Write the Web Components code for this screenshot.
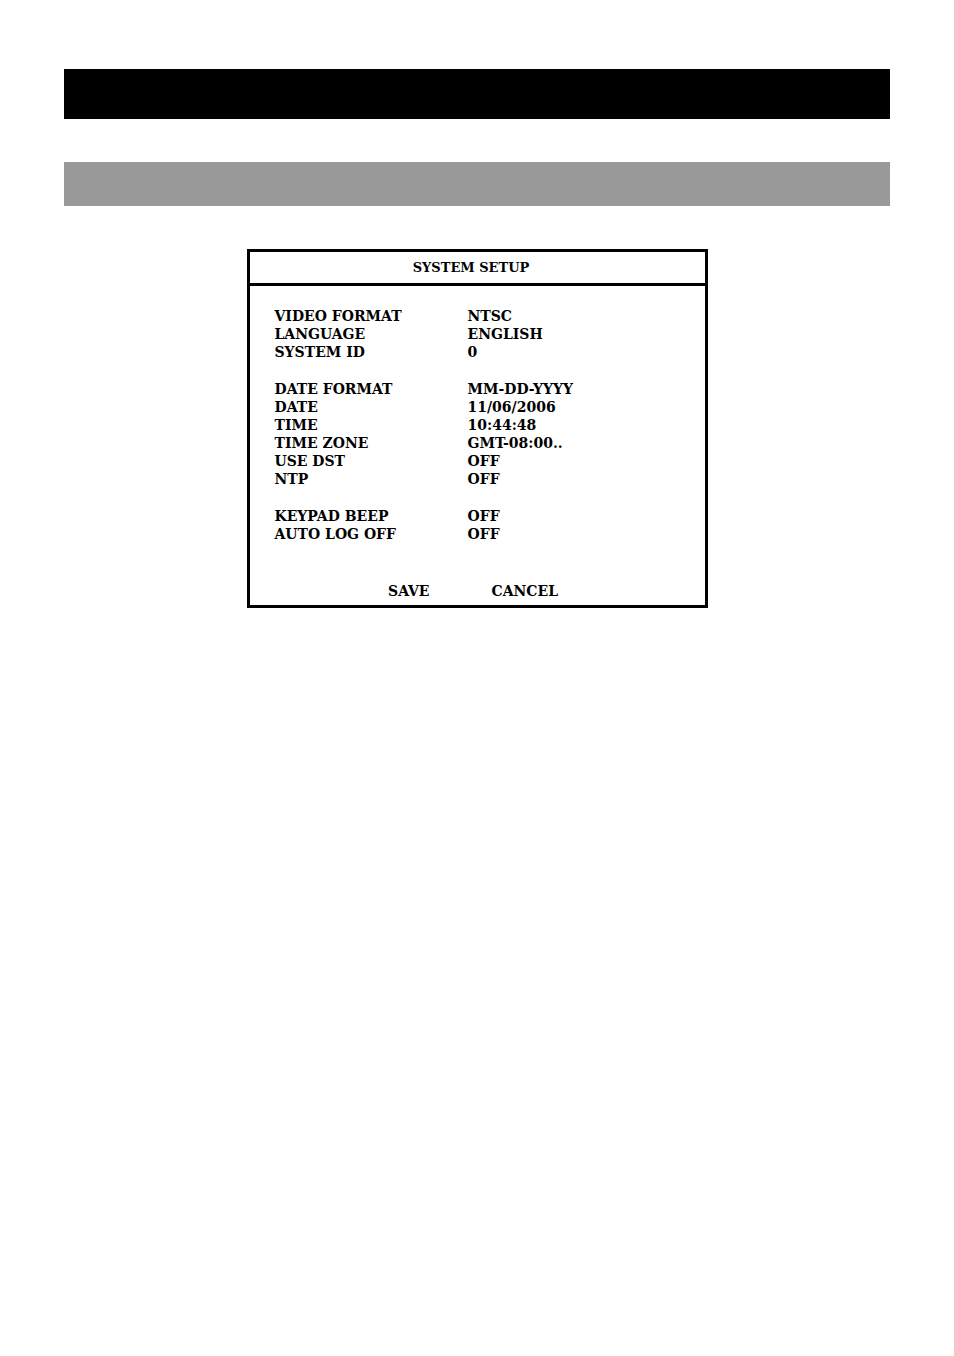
<!DOCTYPE html>
<html lang="en">
<head>
<meta charset="utf-8">
<meta name="viewport" content="width=device-width, initial-scale=1">
<title>System Setup</title>
<style>
body { margin: 0; background: #fff; color: #000; font: bold 14px/18px Rockwell, "DejaVu Serif", serif; }
</style>
</head>
<body>
<manual-page>
  <heading-bar></heading-bar>
  <heading-bar level="section"></heading-bar>
  <setup-panel>
    <span slot="title">SYSTEM SETUP</span>
    <setting-group>
      <setting-row label="VIDEO FORMAT">NTSC</setting-row>
      <setting-row label="LANGUAGE">ENGLISH</setting-row>
      <setting-row label="SYSTEM ID">0</setting-row>
    </setting-group>
    <setting-group>
      <setting-row label="DATE FORMAT">MM-DD-YYYY</setting-row>
      <setting-row label="DATE">11/06/2006</setting-row>
      <setting-row label="TIME">10:44:48</setting-row>
      <setting-row label="TIME ZONE">GMT-08:00..</setting-row>
      <setting-row label="USE DST">OFF</setting-row>
      <setting-row label="NTP">OFF</setting-row>
    </setting-group>
    <setting-group>
      <setting-row label="KEYPAD BEEP">OFF</setting-row>
      <setting-row label="AUTO LOG OFF">OFF</setting-row>
    </setting-group>
    <panel-button slot="actions">SAVE</panel-button>
    <panel-button slot="actions">CANCEL</panel-button>
  </setup-panel>
</manual-page>
<script>
function define(name, html, setup) {
  const template = document.createElement('template');
  template.innerHTML = html;
  customElements.define(name, class extends HTMLElement {
    constructor() {
      super();
      this.attachShadow({ mode: 'open' }).append(template.content.cloneNode(true));
    }
    connectedCallback() {
      if (setup) setup(this);
    }
  });
}

define('manual-page', `
  <style>
    :host { display: block; }
    main { display: flex; flex-direction: column; gap: 43px; padding: 69px 64px; }
  </style>
  <main><slot></slot></main>`);

define('heading-bar', `
  <style>
    :host { display: block; height: 50px; background: #000; }
    :host([level="section"]) { height: 44px; background: #999; }
  </style>`);

define('setup-panel', `
  <style>
    :host { display: block; box-sizing: border-box; width: 100%; max-width: 461px; margin-inline: auto; border: 3px solid #000; }
    h1 { margin: 0; padding: 7px 12px 6px 0; border-bottom: 3px solid #000; font: inherit; font-size: 13px; text-align: center; }
    .settings { display: flex; flex-direction: column; gap: 19px; padding: 21px 25px 39px; }
    footer { display: flex; justify-content: center; gap: 62px; padding: 0 8px 5px 0; }
  </style>
  <h1><slot name="title"></slot></h1>
  <div class="settings"><slot></slot></div>
  <footer><slot name="actions"></slot></footer>`);

define('setting-group', `
  <style>:host { display: flex; flex-direction: column; }</style>
  <slot></slot>`);

define('setting-row', `
  <style>
    :host { display: block; }
    dl { display: grid; grid-template-columns: 193px 1fr; margin: 0; }
    dd { margin: 0; }
  </style>
  <dl><dt></dt><dd><slot></slot></dd></dl>`,
  el => { el.shadowRoot.querySelector('dt').textContent = el.getAttribute('label'); });

define('panel-button', `
  <style>
    :host { display: block; }
    button { display: block; margin: 0; padding: 0; border: 0; background: none; color: inherit; font: inherit; cursor: pointer; }
  </style>
  <button type="button"><slot></slot></button>`);
</script>
</body>
</html>
